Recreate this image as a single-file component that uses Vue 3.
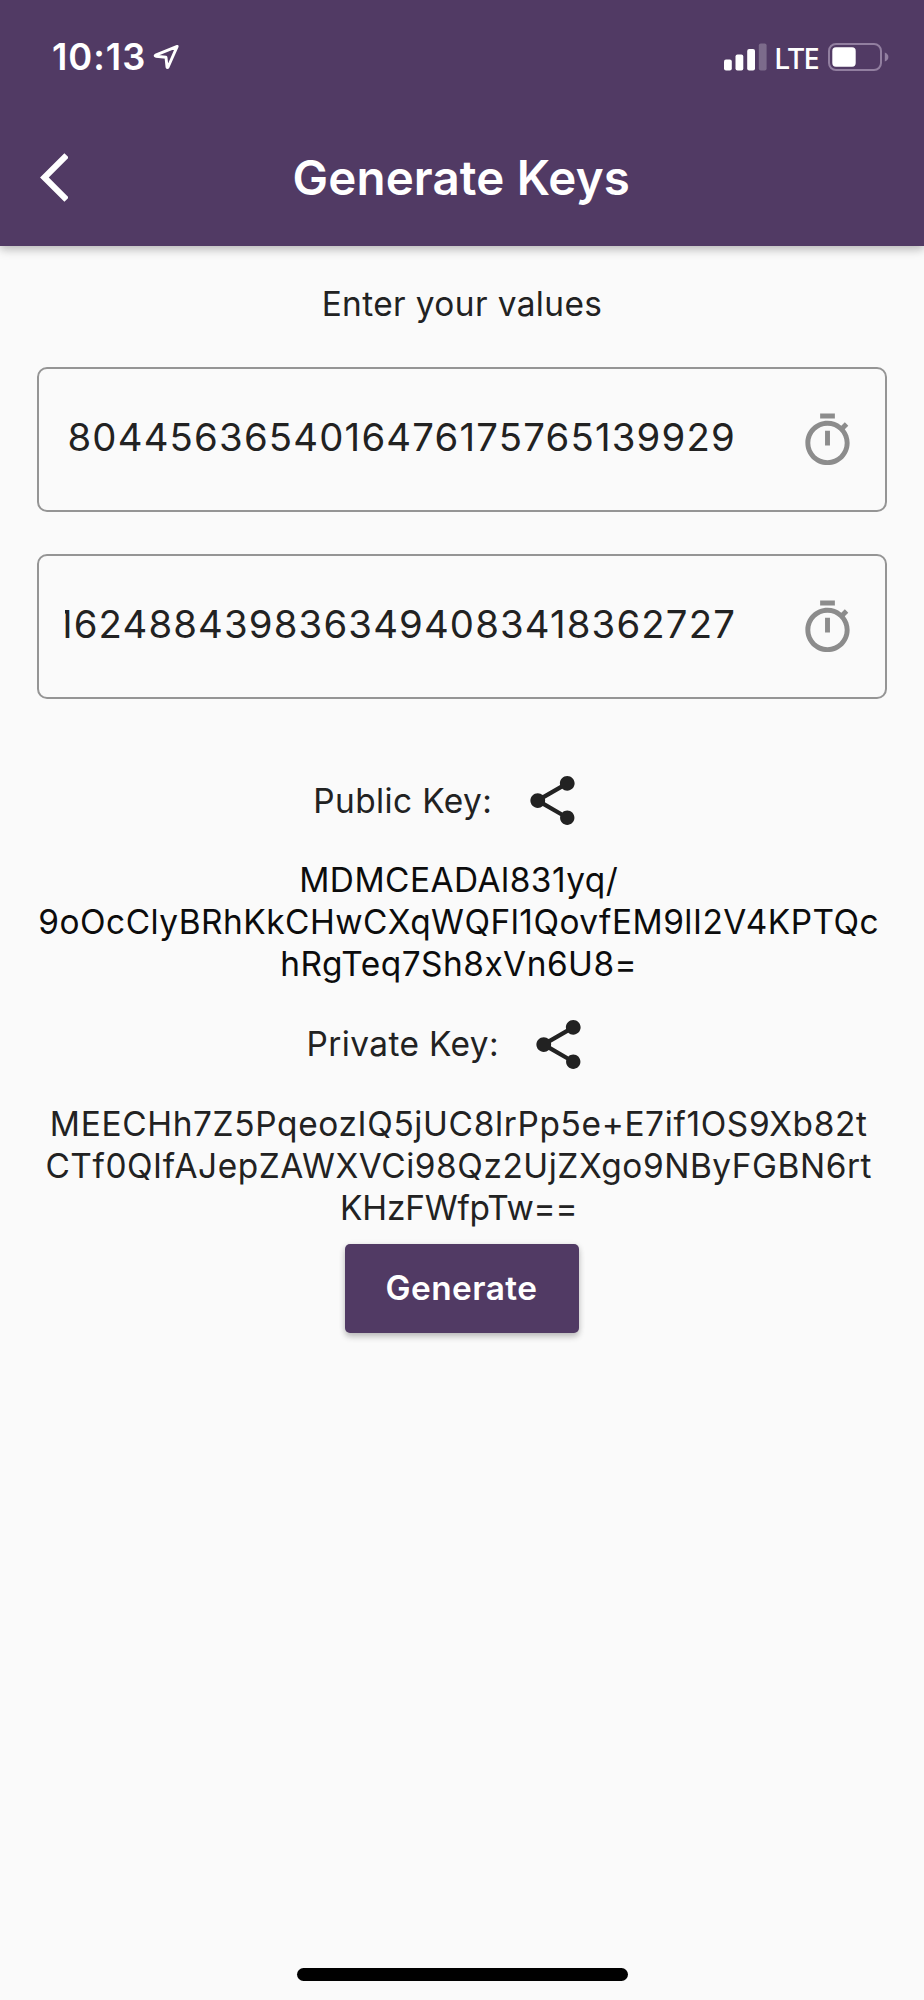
<script setup>
const fields = [
  { id: 'first', value: '8044563654016476175765139929' },
  { id: 'second', value: '1624884398363494083418362727' },
]

const keys = [
  {
    id: 'public',
    label: 'Public Key:',
    lines: ['MDMCEADAl831yq/', '9oOcClyBRhKkCHwCXqWQFl1QovfEM9lI2V4KPTQc', 'hRgTeq7Sh8xVn6U8='],
  },
  {
    id: 'private',
    label: 'Private Key:',
    lines: ['MEECHh7Z5PqeozIQ5jUC8lrPp5e+E7if1OS9Xb82t', 'CTf0QIfAJepZAWXVCi98Qz2UjZXgo9NByFGBN6rt', 'KHzFWfpTw=='],
  },
]
</script>

<template>
  <div class="screen">
    <header class="app-bar">
      <div class="status">
        <span class="time">10:13</span>
        <svg class="location" viewBox="0 0 28 28" width="28" height="28">
          <path d="M24.2 3.4 2.6 12.2Q1.6 12.9 2.8 13.2L13 14.3 14 24Q14.4 25.2 15.1 24Z" />
        </svg>
        <span class="spacer"></span>
        <svg class="signal" viewBox="0 0 43 28" width="43" height="28">
          <rect x="0" y="16.5" width="7.8" height="11" rx="2" />
          <rect x="11.5" y="11.5" width="7.8" height="16" rx="2" />
          <rect x="23.2" y="6" width="7.8" height="21.5" rx="2" />
          <rect class="dim" x="34.8" y="0.5" width="7.8" height="27" rx="2" />
        </svg>
        <span class="network">LTE</span>
        <svg class="battery" viewBox="0 0 62 28" width="62" height="28">
          <rect class="shell" x="1" y="1" width="52" height="26" rx="7" />
          <rect x="4.3" y="4.3" width="23.4" height="19.4" rx="3.6" />
          <path class="nub" d="M56.8 9.5Q60.4 11 60.4 14T56.8 18.5Z" />
        </svg>
      </div>
      <div class="nav">
        <svg class="back" viewBox="0 0 11.67 24" width="28.8" height="59">
          <path d="M11.67 3.87 9.9 2.1 0 12l9.9 9.9 1.77-1.77L3.54 12z" />
        </svg>
        <h1>Generate Keys</h1>
      </div>
    </header>

    <main>
      <p class="hint">Enter your values</p>

      <div v-for="f in fields" :key="f.id" class="field" :class="f.id">
        <div class="value"><span>{{ f.value }}</span></div>
        <svg class="timer" viewBox="0 0 24 24" width="59" height="59">
          <path d="M15 1H9v2h6V1zm-4 13h2V8h-2v6zm8.03-6.61 1.42-1.42c-.43-.51-.9-.99-1.41-1.41l-1.42 1.42C16.07 4.74 14.12 4 12 4c-4.97 0-9 4.03-9 9s4.02 9 9 9 9-4.03 9-9c0-2.12-.74-4.07-1.97-5.61zM12 20c-3.87 0-7-3.13-7-7s3.13-7 7-7 7 3.13 7 7-3.13 7-7 7z" />
        </svg>
      </div>

      <section v-for="k in keys" :key="k.id" class="key" :class="k.id">
        <div class="key-head">
          <span class="label">{{ k.label }}</span>
          <svg viewBox="0 0 24 24" width="59" height="59">
            <path d="M18 16.08c-.76 0-1.44.3-1.96.77L8.91 12.7c.05-.23.09-.46.09-.7s-.04-.47-.09-.7l7.05-4.11c.54.5 1.25.81 2.04.81 1.66 0 3-1.34 3-3s-1.34-3-3-3-3 1.34-3 3c0 .24.04.47.09.7L8.04 9.81C7.5 9.31 6.79 9 6 9c-1.66 0-3 1.34-3 3s1.34 3 3 3c.79 0 1.5-.31 2.04-.81l7.12 4.16c-.05.21-.08.43-.08.65 0 1.61 1.31 2.92 2.92 2.92s2.92-1.31 2.92-2.92-1.31-2.92-2.92-2.92z" />
          </svg>
        </div>
        <p class="key-text">
          <span v-for="(line, i) in k.lines" :key="i" :class="'line' + (i + 1)">{{ line }}</span>
        </p>
      </section>

      <button class="generate" type="button">Generate</button>
    </main>

    <div class="home-bar"></div>
  </div>
</template>

<style>
body {
  margin: 0;
  background: #fafafa;
}
</style>

<style scoped>
.screen {
  display: flex;
  flex-direction: column;
  box-sizing: border-box;
  width: 924px;
  height: 2000px;
  overflow: hidden;
  background: #fafafa;
  color: #222;
  font-family: Inter, "Liberation Sans", sans-serif;
}
.app-bar {
  flex: none;
  box-sizing: border-box;
  height: 246px;
  background: #513a64;
  color: #fff;
  box-shadow: 0 4px 10px rgba(0, 0, 0, 0.16), 0 2px 8px rgba(0, 0, 0, 0.14);
}
.status {
  display: flex;
  align-items: center;
  height: 114px;
  padding: 0 34px 0 52px;
}
.time {
  width: 101px;
  font-size: 36.3px;
  font-weight: 600;
  letter-spacing: 1px;
  white-space: nowrap;
}
.location {
  fill: none;
  stroke: #fff;
  stroke-width: 2.9;
  stroke-linejoin: round;
}
.spacer {
  flex: 1;
}
.signal {
  fill: #fff;
}
.signal .dim {
  opacity: 0.25;
}
.network {
  box-sizing: border-box;
  width: 54px;
  margin-left: 7.5px;
  padding-top: 1px;
  font-family: "Noto Sans", sans-serif;
  font-size: 29.5px;
  font-weight: 500;
  line-height: 36px;
  letter-spacing: -1.3px;
}
.battery {
  fill: #fff;
}
.battery .shell {
  fill: none;
  stroke: #927fa0;
  stroke-width: 2;
}
.battery .nub {
  fill: #927fa0;
}
.nav {
  display: grid;
  grid-template-columns: 90px 1fr 90px;
  align-items: center;
  height: 127px;
}
.back {
  margin-left: 39.5px;
  fill: #fff;
}
h1 {
  margin: 0 1.5px 0 0;
  text-align: center;
  font-size: 47.5px;
  font-weight: 600;
  line-height: 60px;
  letter-spacing: 0.15px;
  white-space: nowrap;
}
main {
  display: flex;
  flex-direction: column;
  align-items: center;
}
.hint {
  margin: 36.5px 0 42.5px;
  font-size: 33.4px;
  line-height: 42px;
  letter-spacing: 0.4px;
}
.field {
  display: flex;
  align-items: center;
  box-sizing: border-box;
  width: 850px;
  height: 145px;
  margin-bottom: 42px;
  padding: 0 28px 0 26px;
  border: 2px solid #959595;
  border-radius: 10px;
}
.value {
  display: flex;
  justify-content: flex-end;
  width: 671px;
  margin-right: auto;
  padding-bottom: 5px;
  overflow: hidden;
  font-size: 38.3px;
  line-height: 48px;
  letter-spacing: 1.2px;
  white-space: nowrap;
}
/* The value is longer than its field, so its first digit runs under the left edge. */
.second .value {
  letter-spacing: 1.16px;
}
.timer {
  margin-top: 1px;
  fill: #8c8c8c;
}
.key-head {
  display: flex;
  align-items: center;
  justify-content: center;
  height: 59px;
  margin-right: 29px;
}
.key-head svg {
  margin-left: 30.5px;
  fill: #222;
}
.label {
  font-size: 33.4px;
  line-height: 42px;
  letter-spacing: 0.4px;
}
.public {
  margin-top: 30px;
}
.private {
  margin-top: 29px;
}
.key-text {
  margin: 30.3px 6.5px 0 0;
  font-size: 33.4px;
  line-height: 41.8px;
  letter-spacing: 0.5px;
}
.key-text span {
  display: block;
  text-align: center;
  white-space: nowrap;
}
.public .key-text {
  color: #0c0c0c;
}
.private .line1 {
  letter-spacing: 0.66px;
}
.private .line2 {
  letter-spacing: 0.56px;
}
.private .line3 {
  letter-spacing: -0.2px;
}
.generate {
  width: 234px;
  height: 89px;
  margin-top: 14.5px;
  padding: 0 1px 1px 0;
  border: 0;
  border-radius: 5px;
  background: #513a64;
  color: #fff;
  box-shadow: 0 4px 6px rgba(0, 0, 0, 0.2), 0 1px 6px rgba(0, 0, 0, 0.1);
  font-family: inherit;
  font-size: 33.4px;
  font-weight: 600;
  letter-spacing: 0.45px;
}
.home-bar {
  width: 331px;
  height: 13px;
  margin: auto auto 19.5px;
  border-radius: 7px;
  background: #000;
}
</style>
